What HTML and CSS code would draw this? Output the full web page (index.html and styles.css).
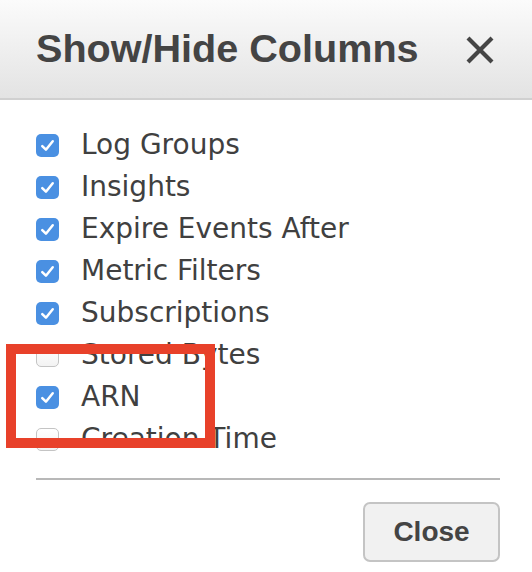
FILE: index.html
```html
<!DOCTYPE html>
<html>
<head>
<meta charset="utf-8">
<link rel="stylesheet" href="styles.css">
</head>
<body>
<div class="dialog">
  <div class="header">
    <h1 class="title">Show/Hide Columns</h1>
    <svg class="close-x" width="30" height="30" viewBox="0 0 30 30"><path d="M3 3 L27 27 M27 3 L3 27" stroke="#454545" stroke-width="4.2" fill="none"/></svg>
  </div>
  <ul class="list">
    <li class="row"><span class="box on"><svg viewBox="0 0 22 22"><path d="M6 11.5 L9.5 15 L16 7" stroke="#fff" stroke-width="2.4" fill="none" stroke-linecap="round" stroke-linejoin="round"/></svg></span>Log Groups</li>
    <li class="row"><span class="box on"><svg viewBox="0 0 22 22"><path d="M6 11.5 L9.5 15 L16 7" stroke="#fff" stroke-width="2.4" fill="none" stroke-linecap="round" stroke-linejoin="round"/></svg></span>Insights</li>
    <li class="row"><span class="box on"><svg viewBox="0 0 22 22"><path d="M6 11.5 L9.5 15 L16 7" stroke="#fff" stroke-width="2.4" fill="none" stroke-linecap="round" stroke-linejoin="round"/></svg></span>Expire Events After</li>
    <li class="row"><span class="box on"><svg viewBox="0 0 22 22"><path d="M6 11.5 L9.5 15 L16 7" stroke="#fff" stroke-width="2.4" fill="none" stroke-linecap="round" stroke-linejoin="round"/></svg></span>Metric Filters</li>
    <li class="row"><span class="box on"><svg viewBox="0 0 22 22"><path d="M6 11.5 L9.5 15 L16 7" stroke="#fff" stroke-width="2.4" fill="none" stroke-linecap="round" stroke-linejoin="round"/></svg></span>Subscriptions</li>
    <li class="row"><span class="box"></span>Stored Bytes</li>
    <li class="row"><span class="box on"><svg viewBox="0 0 22 22"><path d="M6 11.5 L9.5 15 L16 7" stroke="#fff" stroke-width="2.4" fill="none" stroke-linecap="round" stroke-linejoin="round"/></svg></span>ARN</li>
    <li class="row"><span class="box"></span>Creation Time</li>
  </ul>
  <div class="footer">
    <button class="btn">Close</button>
  </div>
  <div class="highlight"></div>
</div>
</body>
</html>
```
FILE: styles.css
```css
html, body {
  margin: 0;
  padding: 0;
  background: #fff;
}
.dialog {
  position: relative;
  width: 532px;
  height: 572px;
  overflow: hidden;
  font-family: "DejaVu Sans", Verdana, sans-serif;
  color: #444;
}
.header {
  height: 100px;
  box-sizing: border-box;
  display: flex;
  align-items: center;
  justify-content: space-between;
  padding: 0 37px 0 36px;
  background: linear-gradient(#fbfbfb, #e3e3e3);
  border-bottom: 2px solid #d0d0d0;
}
.title {
  margin: 0;
  font-family: "Liberation Sans", Arial, sans-serif;
  font-weight: bold;
  font-size: 39.6px;
  color: #444;
  letter-spacing: 0;
  padding-bottom: 2px;
}
.close-x {
  display: block;
  margin-top: 2px;
}
.list {
  list-style: none;
  margin: 0;
  padding: 23px 0 0 36px;
}
.row {
  height: 42px;
  display: flex;
  align-items: center;
  font-size: 28px;
  color: #404040;
}
.box {
  width: 23px;
  height: 23px;
  box-sizing: border-box;
  border-radius: 5px;
  border: 1px solid #c4c4c4;
  background: linear-gradient(#fff, #f3f3f3);
  margin-right: 22px;
  flex: none;
  display: flex;
  margin-top: 2px;
}
.box.on {
  border: none;
  background: #4a90e2;
}
.box svg {
  width: 23px;
  height: 23px;
}
.footer {
  margin: 19px 32px 0 36px;
  border-top: 2px solid #b8b8b8;
  padding-top: 22px;
  display: flex;
  justify-content: flex-end;
}
.btn {
  width: 137px;
  height: 60px;
  border: 2px solid #c4c4c4;
  border-radius: 7px;
  background: #f1f1f1;
  font-family: "Liberation Sans", Arial, sans-serif;
  font-weight: bold;
  font-size: 28px;
  color: #444;
  padding: 0;
}
.highlight {
  position: absolute;
  left: 6px;
  top: 344px;
  width: 209px;
  height: 104px;
  box-sizing: border-box;
  border: 10px solid #e8412a;
}
```
